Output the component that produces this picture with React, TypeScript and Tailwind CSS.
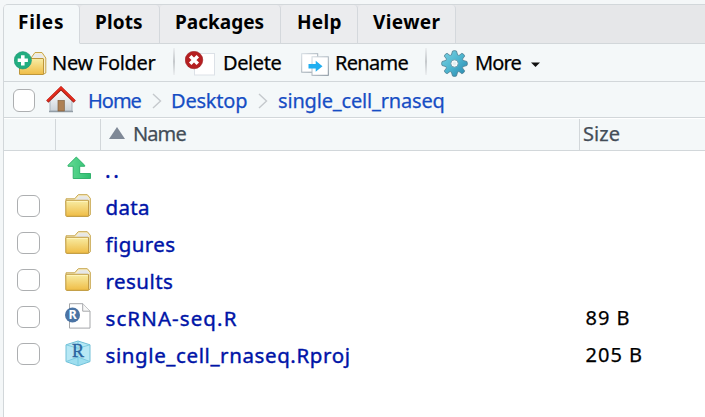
import type { ReactNode } from "react";

function Folder({ className = "" }: { className?: string }) {
  return (
    <svg viewBox="0 0 27 23" width="27" height="23" className={className}>
      <defs>
        <linearGradient id="folderFront" x1="0" y1="0" x2="0" y2="1">
          <stop offset="0" stopColor="#f8eda5" />
          <stop offset="1" stopColor="#efbc45" />
        </linearGradient>
      </defs>
      <path d="M1 6.5V4.8h8.7l3.6-4.1h9l3 3.6v16.5l-1.8 1.3H2z" fill="#f7edc9" stroke="#c7a54a" />
      <path d="M12 5l2.3-2.8h7.4l2.3 2.8v15h-1V6H11z" fill="#e6e7e8" />
      <rect x=".8" y="6.3" width="22.8" height="16" rx=".7" fill="url(#folderFront)" stroke="#bd963b" />
      <path d="M1.8 7.4h20.8" stroke="#fff5bd" />
    </svg>
  );
}

function NewFolder() {
  return (
    <svg viewBox="0 0 33 25" width="33" height="25">
      <path d="M17 7l4-5.5h7l3.8 5.5v15l-2 1H17z" fill="#f8efcf" stroke="#c7a54a" />
      <path d="M18.5 6.5L21.5 3h6l2.7 4z" fill="#e8e9ea" />
      <rect x="5.5" y="7.5" width="24" height="16" rx=".5" fill="url(#folderFront)" stroke="#bd963b" />
      <circle cx="8.8" cy="9.3" r="8.7" fill="#22ad80" stroke="#178e70" strokeWidth=".5" />
      <path d="M8.8 4.2v10.2M3.7 9.3h10.2" stroke="#fff" strokeWidth="3.6" />
    </svg>
  );
}

function DeleteIcon() {
  return (
    <svg viewBox="0 0 30 25" width="30" height="25">
      <rect x="9.5" y="2.5" width="20" height="21.5" fill="#fff" stroke="#dce1e7" />
      <circle cx="9" cy="9" r="8.8" fill="#b51f21" stroke="#941719" strokeWidth=".5" />
      <path d="M5.2 5.2l7.6 7.6M12.8 5.2l-7.6 7.6" stroke="#fff" strokeWidth="3.5" />
    </svg>
  );
}

function RenameIcon() {
  return (
    <svg viewBox="0 0 28 23" width="28" height="23">
      <defs>
        <linearGradient id="paper" x1="0" y1="0" x2="1" y2="1">
          <stop offset="0" stopColor="#d3dbe1" />
          <stop offset="1" stopColor="#818e99" />
        </linearGradient>
      </defs>
      <rect x=".7" y=".7" width="16" height="18.5" fill="#fff" stroke="url(#paper)" />
      <rect x="11" y="3.8" width="16.3" height="18.5" fill="#fff" stroke="url(#paper)" />
      <path d="M7.5 11h7.2V7.7l6.8 5.6-6.8 5.5v-3.3H7.5z" fill="#20aef0" />
    </svg>
  );
}

function Gear() {
  return (
    <svg viewBox="-13.5 -13.5 27 27" width="27" height="27">
      <defs>
        <linearGradient id="gearFill" x1="0" y1="0" x2="1" y2="1">
          <stop offset="0" stopColor="#7fd3e3" />
          <stop offset=".5" stopColor="#4db5cf" />
          <stop offset="1" stopColor="#2584ad" />
        </linearGradient>
      </defs>
      <path
        fill="url(#gearFill)"
        stroke="#4c7d90"
        strokeWidth=".8"
        strokeLinejoin="round"
        d="M-2-12.4Q0-13.4 2-12.4L3.1-8.6Q4-8.2 4.5-8L7.4-10.2Q9.6-9.6 10.2-7.4L8-4.5Q8.2-4 8.6-3.1L12.4-2Q13.4 0 12.4 2L8.6 3.1Q8.2 4 8 4.5L10.2 7.4Q9.6 9.6 7.4 10.2L4.5 8Q4 8.2 3.1 8.6L2 12.4Q0 13.4-2 12.4L-3.1 8.6Q-4 8.2-4.5 8L-7.4 10.2Q-9.6 9.6-10.2 7.4L-8 4.5Q-8.2 4-8.6 3.1L-12.4 2Q-13.4 0-12.4-2L-8.6-3.1Q-8.2-4-8-4.5L-10.2-7.4Q-9.6-9.6-7.4-10.2L-4.5-8Q-4-8.2-3.1-8.6z"
      />
      <circle r="3.7" fill="#f5fafb" stroke="#6b97a8" strokeWidth=".9" />
      <circle r="1.8" fill="#e4edef" />
    </svg>
  );
}

function House() {
  return (
    <svg viewBox="0 0 30 28" width="30" height="28">
      <defs>
        <linearGradient id="wall" x1="0" y1="0" x2="0" y2="1">
          <stop offset="0" stopColor="#fff" />
          <stop offset="1" stopColor="#cbd2d8" />
        </linearGradient>
      </defs>
      <path d="M4 14L15 4l11 10v11.2H4z" fill="url(#wall)" stroke="#a9b3bc" />
      <path d="M3 25.5h24" stroke="#929da6" strokeWidth="1.5" />
      <rect x="12" y="14.5" width="6.3" height="10.5" fill="#ae8054" stroke="#80603e" strokeWidth=".7" />
      <path d="M1.3 15.7L15 2.3l13.7 13.4" fill="none" stroke="#9e1f17" strokeWidth="3.2" />
      <path d="M1.5 15L15 1.8 28.5 15" fill="none" stroke="#e52b1d" strokeWidth="2.2" />
    </svg>
  );
}

function UpArrow() {
  return (
    <svg viewBox="0 0 24 24" width="24" height="24">
      <defs>
        <linearGradient id="upFill">
          <stop offset="0" stopColor="#63da93" />
          <stop offset="1" stopColor="#2dbe71" />
        </linearGradient>
      </defs>
      <path
        d="M9.3 1L1 9.3v1h5.2v12.2h17.3v-5H12.7v-7.2h5v-1z"
        fill="url(#upFill)"
        stroke="#27ad64"
        strokeWidth=".9"
        strokeLinejoin="round"
      />
    </svg>
  );
}

function RScript() {
  return (
    <svg viewBox="0 0 27 26" width="27" height="26">
      <path d="M4.5.7h13.3l7.2 7.5v16.9H4.5z" fill="#fff" stroke="#a5a7aa" />
      <path d="M17.7.7v7.5H25" fill="#f8f8f8" stroke="#a5a7aa" />
      <circle cx="7.5" cy="12" r="7.5" fill="#4a73a4" />
      <text x="7.6" y="16.4" textAnchor="middle" fill="#fff" fontSize="12.5" fontWeight="700" fontFamily="Noto Sans, sans-serif">R</text>
    </svg>
  );
}

function RProject() {
  return (
    <svg viewBox="0 0 26 27" width="26" height="27">
      <path d="M1 4.8L13 1l12 3.8v16.8l-12 4.2-12-4.2z" fill="#b7e8f5" stroke="#72c0d8" />
      <path d="M1 4.8l12 3.5 12-3.5M1 21.6l12-4.6 12 4.6M13 1v24.8" fill="none" stroke="#7ac9de" strokeWidth=".9" />
      <path d="M1 21.6L13 17l12 4.6-12 4.2z" fill="#6fcbe4" opacity=".35" />
      <text x="13" y="16.8" textAnchor="middle" fill="#2b65a0" stroke="#2b65a0" strokeWidth=".4" fontSize="18" fontFamily="Liberation Serif, serif">R</text>
    </svg>
  );
}

function Check({ className = "" }: { className?: string }) {
  return <span className={`shrink-0 rounded-[6px] border border-[#adafb1] bg-white ${className}`} />;
}

function Chevron() {
  return (
    <svg viewBox="0 0 10 16" width="10" height="16" className="mt-[2px] shrink-0">
      <path d="M1 1l7.5 7L1 15" fill="none" stroke="#c5c9cd" strokeWidth="1.4" />
    </svg>
  );
}

function Divider() {
  return <span className="mt-[4px] h-[27px] w-[2px] shrink-0 self-start bg-linear-to-b from-[#eceff1] via-[#c5c9cc] to-[#eceff1]" />;
}

const tabs = [
  { name: "Files", box: "w-[76px] border-r-[#d4d8dc] border-b-[#f4f8f9] bg-[#f4f8f9] pl-[14px]", text: "tracking-[0.7px]" },
  { name: "Plots", box: "w-[80px] border-r-[#d4d8dc] border-b-[#d2d7da] bg-[#ebecee] pl-[15px]", text: "tracking-[0.1px]" },
  { name: "Packages", box: "w-[121px] border-r-[#d4d8dc] border-b-[#d2d7da] bg-[#ebecee] pl-[15px]", text: "tracking-[0px]" },
  { name: "Help", box: "w-[77px] border-r-[#d4d8dc] border-b-[#d2d7da] bg-[#ebecee] pl-[16px]", text: "tracking-[0.3px]" },
  { name: "Viewer", box: "w-[98px] border-r-[#d4d8dc] border-b-[#d2d7da] bg-[#ebecee] pl-[15px]", text: "tracking-[0.4px]" },
];

type File = { name: string; icon: ReactNode; size?: string; track: string };

const files: File[] = [
  { name: "data", icon: <Folder />, track: "tracking-[0.3px]" },
  { name: "figures", icon: <Folder />, track: "tracking-[0.4px]" },
  { name: "results", icon: <Folder />, track: "tracking-[0.45px]" },
  { name: "scRNA-seq.R", icon: <RScript />, size: "89 B", track: "tracking-[1.1px]" },
  { name: "single_cell_rnaseq.Rproj", icon: <RProject />, size: "205 B", track: "tracking-[0.6px]" },
];

export default function App() {
  return (
    <div className="flex h-[417px] w-[705px] flex-col overflow-hidden bg-[#f4f7f8] pt-[4px] pl-[3px] font-['Noto_Sans','Open_Sans',sans-serif] text-[20px] leading-[30px] whitespace-nowrap text-black [-webkit-text-stroke:0.25px]">
      <main className="flex flex-1 flex-col rounded-tl-[5px] border-t border-l border-[#d2d7da] bg-white">
        <nav className="flex h-[39px] shrink-0 bg-[#e6e7e9] [-webkit-text-stroke:0px]">
          {tabs.map((t) => (
            <div key={t.name} className={`shrink-0 rounded-t-[4px] border-r border-b pt-[2px] text-[19px] font-bold ${t.box}`}>
              <span className={t.text}>{t.name}</span>
            </div>
          ))}
          <div className="flex-1 border-b border-[#d2d7da]" />
        </nav>

        <div className="flex h-[38px] shrink-0 border-b border-[#d2d7da] bg-[#f4f8f9]">
          <div className="flex w-[169px] shrink-0 pt-[4px] pl-[10px]">
            <div className="mt-[3px] shrink-0"><NewFolder /></div>
            <span className="ml-[5px] tracking-[-0.3px]">New Folder</span>
          </div>
          <Divider />
          <div className="flex w-[125px] shrink-0 pt-[4px] pl-[10px]">
            <div className="mt-[3px] shrink-0"><DeleteIcon /></div>
            <span className="ml-[8px] tracking-[-0.4px]">Delete</span>
          </div>
          <div className="flex w-[125px] shrink-0 pt-[4px] pl-[1px]">
            <div className="mt-[5px] shrink-0"><RenameIcon /></div>
            <span className="ml-[6px] tracking-[-0.7px]">Rename</span>
          </div>
          <Divider />
          <div className="flex pt-[4px] pl-[14px]">
            <div className="mt-[2px] shrink-0"><Gear /></div>
            <span className="ml-[7px] tracking-[-0.9px]">More</span>
            <svg viewBox="0 0 9 5" width="9" height="5" className="mt-[14px] ml-[10px]"><path d="M0 .5h9L4.5 5z" fill="#111" /></svg>
          </div>
        </div>

        <div className="flex h-[36px] shrink-0 items-center border-b border-[#d2d7da] bg-[#f4f8f9] pl-[9px] text-[#164dc4]">
          <Check className="mt-[2px] h-[23px] w-[22px]" />
          <div className="mr-[12px] ml-[11px] shrink-0"><House /></div>
          <span className="mt-[2px] w-[64px] tracking-[-1px]">Home</span>
          <Chevron />
          <span className="mt-[2px] ml-[9px] w-[87px] tracking-[-0.2px]">Desktop</span>
          <Chevron />
          <span className="mt-[2px] ml-[10px] tracking-[-0.17px]">single_cell_rnaseq</span>
        </div>

        <div className="flex h-[33px] shrink-0 border-t border-b border-t-white border-b-[#d2d7da] bg-[#f4f8f9] text-[#434d57]">
          <div className="w-[52px] shrink-0 border-r border-[#d2d7da]" />
          <div className="w-[45px] shrink-0 border-r border-[#d2d7da]" />
          <div className="flex w-[479px] shrink-0 border-r border-[#d2d7da]">
            <svg viewBox="0 0 16 12" width="16" height="12" className="mt-[8px] ml-[8px]"><path d="M8 0l8 12H0z" fill="#7f8997" /></svg>
            <span className="ml-[8px] tracking-[-0.9px]">Name</span>
          </div>
          <span className="ml-[3px] tracking-[0.1px]">Size</span>
        </div>

        <div className="flex h-[37px] shrink-0 items-center text-[#0014a7]">
          <div className="mb-[3px] ml-[63px] w-[38px]"><UpArrow /></div>
          <span className="text-[21px] tracking-[2.5px] [-webkit-text-stroke:0.4px]">..</span>
        </div>
        {files.map((f) => (
          <div key={f.name} className="flex h-[37px] shrink-0 items-center pl-[13px]">
            <Check className="mb-[2px] h-[22px] w-[23px]" />
            <div className="mb-[3px] ml-[25px] flex w-[40.5px] shrink-0 items-center">{f.icon}</div>
            <span className={`w-[480px] text-[20.5px] text-[#0014a7] [-webkit-text-stroke:0.4px] ${f.track}`}>{f.name}</span>
            {f.size && <span className="tracking-[1px]">{f.size}</span>}
          </div>
        ))}
      </main>
    </div>
  );
}
